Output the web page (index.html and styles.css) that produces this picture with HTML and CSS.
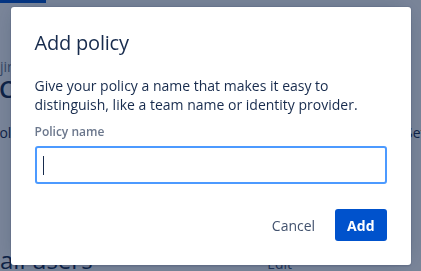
FILE: index.html
```html
<!DOCTYPE html>
<html lang="en">

<head>
    <meta charset="UTF-8" />
    <meta name="viewport" content="width=device-width, initial-scale=1" />
    <title>Add policy</title>
    <link rel="stylesheet" href="styles.css">
</head>

<body>
    <div class="page">
        <div class="tab-indicator"></div>
        <div class="crumb">jira</div>
        <h2 class="page-title">Create</h2>
        <div class="policy-row">
            <span class="policy-name">Policies</span>
            <span class="policy-link">Settings</span>
        </div>
        <div class="users-row">
            <h3 class="users-title">all users</h3>
            <span class="edit-link">Edit</span>
        </div>
    </div>

    <div class="blanket">
        <div class="modal" role="dialog">
            <h1 class="modal-title">Add policy</h1>
            <p class="modal-text">Give your policy a name that makes it easy to distinguish, like a team name or identity provider.</p>
            <label class="field-label">Policy name</label>
            <div class="text-field"><span class="caret"></span></div>
            <div class="modal-footer">
                <button class="btn btn-subtle">Cancel</button>
                <button class="btn btn-primary">Add</button>
            </div>
        </div>
    </div>
</body>

</html>
```

FILE: styles.css
```css
body {
    margin: 0;
    font-family: 'Open Sans', 'Noto Sans', sans-serif;
    color: #172b4d;
    background: white;
    overflow: hidden;
}

.page {
    height: 271px;
    overflow: hidden;
}

.tab-indicator {
    width: 46px;
    height: 3px;
    background: #0052cc;
}

.crumb {
    margin-top: 55px;
    font-size: 14px;
    line-height: 18px;
    color: #6b778c;
}

.page-title {
    margin: 0 0 0 -1px;
    font-size: 24px;
    line-height: 26px;
    font-weight: 600;
}

.policy-row {
    display: flex;
    justify-content: space-between;
    margin: 22px -36px 0 -9px;
    font-size: 14px;
    line-height: 18px;
}

.users-row {
    display: flex;
    align-items: baseline;
    justify-content: space-between;
    width: 292px;
    margin-top: 104px;
}

.users-title {
    margin: 0;
    font-size: 24px;
    line-height: 28px;
    font-weight: 500;
}

.edit-link {
    font-size: 14px;
    color: #42526e;
}

.blanket {
    position: fixed;
    inset: 0;
    background: rgba(9, 30, 66, 0.54);
    display: flex;
    justify-content: center;
    align-items: flex-start;
    padding-top: 7px;
}

.modal {
    width: 400px;
    height: 258px;
    box-sizing: border-box;
    padding: 24px;
    background: white;
    border-radius: 3px;
    box-shadow: 0 0 0 1px rgba(9, 30, 66, 0.08), 0 2px 1px rgba(9, 30, 66, 0.08), 0 0 20px -6px rgba(9, 30, 66, 0.31);
    display: flex;
    flex-direction: column;
}

.modal-title {
    margin: 0;
    font-size: 20px;
    line-height: 24px;
    font-weight: 500;
    letter-spacing: -0.2px;
}

.modal-text {
    margin: 21px 0 0;
    font-size: 14px;
    line-height: 19px;
}

.field-label {
    margin-top: 10px;
    font-size: 12px;
    line-height: 16px;
    font-weight: 600;
    color: #6b778c;
}

.text-field {
    margin-top: 6px;
    height: 38px;
    box-sizing: border-box;
    border: 2px solid #4c9aff;
    border-radius: 3px;
    padding: 0 6px;
    display: flex;
    align-items: center;
}

.caret {
    width: 1px;
    height: 19px;
    background: #172b4d;
}

.modal-footer {
    margin-top: auto;
    display: flex;
    justify-content: flex-end;
    gap: 8px;
}

.btn {
    height: 32px;
    padding: 0 12px;
    border: none;
    border-radius: 3px;
    font-family: inherit;
    font-size: 14px;
    font-weight: 500;
    cursor: pointer;
}

.btn-subtle {
    background: none;
    color: #42526e;
}

.btn-primary {
    background: #0052cc;
    color: white;
    font-weight: 700;
}
```
